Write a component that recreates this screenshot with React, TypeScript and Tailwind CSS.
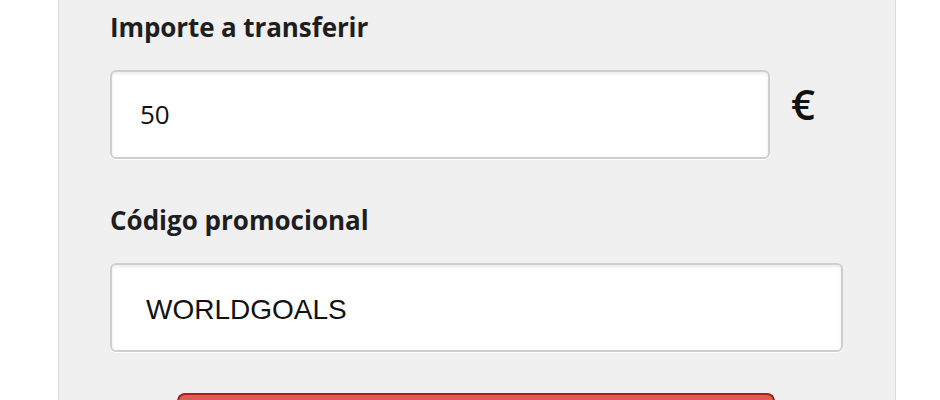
export default function App() {
  return (
    <div className="flex h-[400px] w-[940px] overflow-hidden bg-white">
      {/* left gutter */}
      <div className="w-[58px] shrink-0 bg-white" />

      {/* form panel */}
      <div className="flex w-[838px] shrink-0 flex-col border-x border-[#dcdcdc] bg-[#f0f0f0] pl-[51px] pt-[10px] font-['Open_Sans',sans-serif]">
        <label className="text-[26px] font-bold leading-[34px] tracking-[-0.1px] text-[#1e1e1e]">Importe a transferir</label>

        <div className="mt-[26px] flex shrink-0 items-center">
          <div className="flex h-[89px] w-[660px] items-center rounded-[6px] border-2 border-[#cfcfcf] bg-white pl-[28px] text-[26px] text-[#111] shadow-[inset_0_2px_3px_rgba(0,0,0,0.08),0_1px_0_#ffffff]">
            50
          </div>
          <span className="ml-[21px] -mt-[22px] text-[42px] font-semibold leading-none text-[#111]">€</span>
        </div>

        <label className="mt-[44px] text-[26px] font-bold leading-[34px] text-[#1e1e1e]">Código promocional</label>

        <div className="mt-[26px] flex h-[89px] w-[733px] shrink-0 items-center rounded-[6px] border-2 border-[#cfcfcf] bg-white pl-[34px] pt-[4px] font-['Liberation_Sans',sans-serif] text-[28px] text-[#111] shadow-[inset_0_2px_3px_rgba(0,0,0,0.08),0_1px_0_#ffffff]">
          WORLDGOALS
        </div>

        <div className="ml-[67px] mt-[41px] h-[40px] w-[598px] shrink-0 rounded-t-[8px] border-2 border-b-0 border-[#a8201a] bg-[#dc5c56]" />
      </div>

      <div className="flex-1 bg-white" />
    </div>
  )
}
